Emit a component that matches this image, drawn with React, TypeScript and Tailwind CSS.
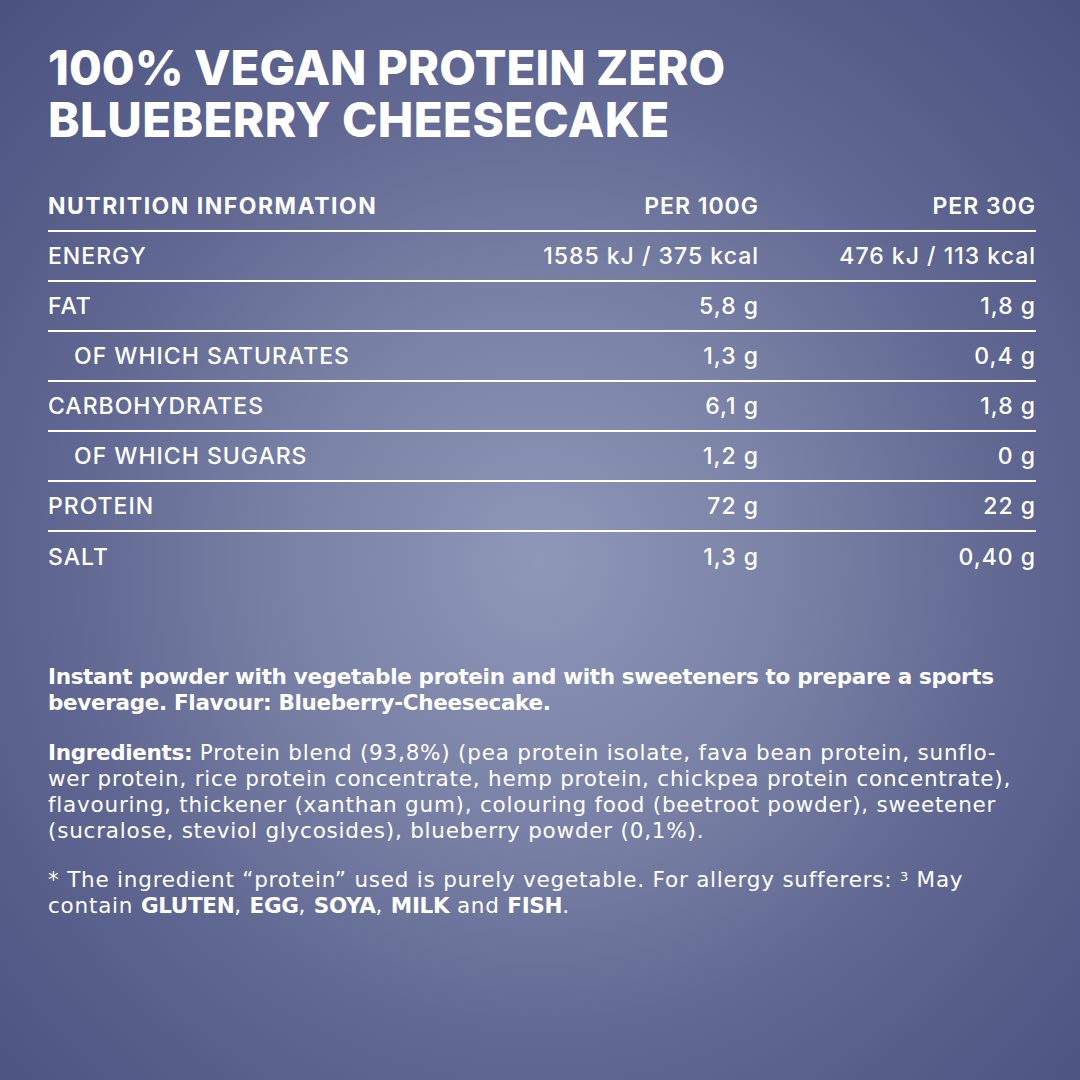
import React from 'react';

const rows = [
  { label: 'ENERGY', a: '1585 kJ / 375 kcal', b: '476 kJ / 113 kcal' },
  { label: 'FAT', a: '5,8 g', b: '1,8 g' },
  { label: 'OF WHICH SATURATES', a: '1,3 g', b: '0,4 g', sub: true },
  { label: 'CARBOHYDRATES', a: '6,1 g', b: '1,8 g' },
  { label: 'OF WHICH SUGARS', a: '1,2 g', b: '0 g', sub: true },
  { label: 'PROTEIN', a: '72 g', b: '22 g' },
  { label: 'SALT', a: '1,3 g', b: '0,40 g' },
];

const B = ({ children }: { children: React.ReactNode }) => (
  <span className="font-bold tracking-[-0.33px]">{children}</span>
);

export default function App() {
  return (
    <div className="w-[1080px] h-[1080px] overflow-hidden text-white bg-[radial-gradient(ellipse_at_50%_52%,#8e98b8_0%,#7880a5_35%,#5d6590_65%,#4b5280_100%)]">
      <div className="pl-[48px] pr-[44px] pt-[42px]">
        {/* Titel */}
        <h1 className="font-['Inter',sans-serif] font-extrabold text-[47.5px] leading-[52px]">
          100% VEGAN PROTEIN ZERO
          <br />
          <span className="tracking-[0.4px]">BLUEBERRY CHEESECAKE</span>
        </h1>

        {/* Tabelle */}
        <div className="mt-[36px] font-['Inter',sans-serif] text-[23px] tracking-[1px]">
          <div className="flex items-center h-[50px] border-b-2 border-white">
            <div className="flex-1 font-bold tracking-[1.5px]">NUTRITION INFORMATION</div>
            <div className="w-[250px] text-right font-semibold">PER 100G</div>
            <div className="w-[277px] text-right font-semibold">PER 30G</div>
          </div>
          {rows.map((r, i) => (
            <div
              key={r.label}
              className={`flex items-center h-[50px] font-medium ${i < rows.length - 1 ? 'border-b-2 border-white' : ''}`}
            >
              <div className={`flex-1 ${r.sub ? 'pl-[26px]' : ''}`}>{r.label}</div>
              <div className="w-[250px] text-right">{r.a}</div>
              <div className="w-[277px] text-right">{r.b}</div>
            </div>
          ))}
        </div>

        {/* Beschreibung */}
        <div className="mt-[82px] font-['DejaVu_Sans',sans-serif] text-[21.5px] leading-[26px] tracking-[0.78px] whitespace-nowrap">
          <p>
            <B>Instant powder with vegetable protein and with sweeteners to prepare a sports</B>
            <br />
            <B>beverage. Flavour: Blueberry-Cheesecake.</B>
          </p>
          <p className="mt-[24px]">
            <B>Ingredients:</B> Protein blend (93,8%) (pea protein isolate, fava bean protein, sunflo-
            <br />
            wer protein, rice protein concentrate, hemp protein, chickpea protein concentrate),
            <br />
            flavouring, thickener (xanthan gum), colouring food (beetroot powder), sweetener
            <br />
            (sucralose, steviol glycosides), blueberry powder (0,1%).
          </p>
          <p className="mt-[23px]">
            * The ingredient “protein” used is purely vegetable. For allergy sufferers: <sup className="text-[13px]">3</sup> May
            <br />
            contain <B>GLUTEN</B>, <B>EGG</B>, <B>SOYA</B>, <B>MILK</B> and <B>FISH</B>.
          </p>
        </div>
      </div>
    </div>
  );
}
